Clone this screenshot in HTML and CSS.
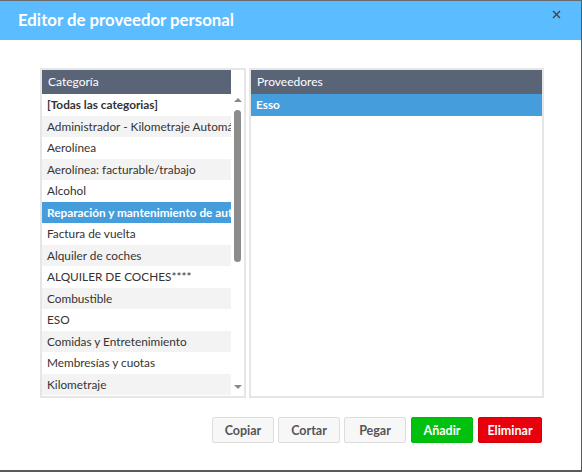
FILE: index.html
```html
<!DOCTYPE html>
<html lang="es">
<head>
  <meta charset="UTF-8">
  <title>Editor de proveedor personal</title>
  <link rel="stylesheet" href="styles.css">
</head>
<body>
  <div class="dialog">
    <!-- Titelleiste -->
    <div class="dialog-header">
      <span class="dialog-title">Editor de proveedor personal</span>
      <button class="close-btn" title="Cerrar">
        <svg width="9" height="9" viewBox="0 0 9 9"><path d="M1 1 L8 8 M8 1 L1 8" stroke="#444" stroke-width="1.4"/></svg>
      </button>
    </div>

    <div class="dialog-body">
      <!-- Kategorien links -->
      <div class="panel panel-left">
        <div class="list">
          <div class="list-head">Categoría</div>
          <div class="row bold">[Todas las categorias]</div>
          <div class="row">Administrador - Kilometraje Automático</div>
          <div class="row">Aerolínea</div>
          <div class="row">Aerolínea: facturable/trabajo</div>
          <div class="row">Alcohol</div>
          <div class="row selected">Reparación y mantenimiento de automóviles</div>
          <div class="row">Factura de vuelta</div>
          <div class="row">Alquiler de coches</div>
          <div class="row">ALQUILER DE COCHES****</div>
          <div class="row">Combustible</div>
          <div class="row">ESO</div>
          <div class="row">Comidas y Entretenimiento</div>
          <div class="row">Membresías y cuotas</div>
          <div class="row">Kilometraje</div>
        </div>
        <div class="scrollbar">
          <span class="arrow up"></span>
          <div class="track"><div class="thumb"></div></div>
          <span class="arrow down"></span>
        </div>
      </div>

      <!-- Anbieter rechts -->
      <div class="panel panel-right">
        <div class="list">
          <div class="list-head">Proveedores</div>
          <div class="row selected">Esso</div>
        </div>
      </div>
    </div>

    <div class="dialog-footer">
      <button class="btn">Copiar</button>
      <button class="btn">Cortar</button>
      <button class="btn">Pegar</button>
      <button class="btn btn-add">Añadir</button>
      <button class="btn btn-delete">Eliminar</button>
    </div>
  </div>
</body>
</html>
```

FILE: styles.css
```css
/* Grundlayout */
body {
  margin: 0;
  background-color: #ffffff;
  font-family: Lato, "Open Sans", sans-serif;
  color: #333333;
}
.dialog {
  width: 582px;
  height: 472px;
  box-sizing: border-box;
  border-top: 1px solid #6a6a6a;
  border-right: 1px solid #5a5a5a;
  border-bottom: 2px solid #5a5a5a;
  display: flex;
  flex-direction: column;
  background-color: #ffffff;
}
/* Titelleiste */
.dialog-header {
  height: 39px;
  background-color: #5bbcff;
  position: relative;
  display: flex;
  align-items: center;
  padding-left: 18px;
}
.dialog-title {
  color: #ffffff;
  font-size: 16.8px;
  font-weight: bold;
  margin-top: -2px;
}
.close-btn {
  position: absolute;
  right: 20px;
  top: 6px;
  border: none;
  background: transparent;
  padding: 0;
  cursor: pointer;
}
/* Inhalt mit zwei Listen */
.dialog-body {
  display: flex;
  gap: 3px;
  padding: 28px 0 0 40px;
  height: 330px;
}
.panel {
  border: 2px solid #e6e6e6;
  display: flex;
  background-color: #ffffff;
}
.panel-left {
  width: 202px;
}
.panel-right {
  width: 291px;
}
.list {
  flex: 1;
  overflow: hidden;
}
.list-head {
  height: 24px;
  line-height: 24px;
  background-color: #5a6477;
  color: #ffffff;
  font-size: 12px;
  padding-left: 6px;
}
.row {
  height: 21.5px;
  line-height: 21.5px;
  font-size: 11.8px;
  padding-left: 5px;
  white-space: nowrap;
  overflow: hidden;
}
.row:nth-child(odd) {
  background-color: #f3f3f3;
}
.row.bold {
  font-weight: bold;
}
.row.selected {
  background-color: #459ddb;
  color: #ffffff;
  font-weight: bold;
}
/* Bildlaufleiste */
.scrollbar {
  width: 13px;
  display: flex;
  flex-direction: column;
  align-items: center;
  padding-top: 28px;
  padding-bottom: 7px;
}
.arrow {
  width: 0;
  height: 0;
  border-left: 4px solid transparent;
  border-right: 4px solid transparent;
}
.arrow.up {
  border-bottom: 4px solid #8a8a8a;
}
.arrow.down {
  border-top: 4px solid #8a8a8a;
}
.track {
  flex: 1;
  width: 100%;
  display: flex;
  justify-content: center;
  padding-top: 8px;
}
.thumb {
  width: 7px;
  height: 152px;
  border-radius: 4px;
  background-color: #8c8c8c;
}
/* Schaltflächen unten */
.dialog-footer {
  display: flex;
  justify-content: flex-end;
  gap: 4px;
  padding: 19px 39px 0 0;
}
.btn {
  width: 62px;
  height: 26px;
  box-sizing: border-box;
  border: 1px solid #dddddd;
  border-radius: 2px;
  background-color: #f7f7f7;
  color: #555555;
  font-family: inherit;
  font-size: 12.5px;
  font-weight: bold;
  cursor: pointer;
}
.btn-add {
  background-color: #00c20e;
  border-color: #00b50c;
  color: #ffffff;
  margin-left: 1px;
}
.btn-delete {
  background-color: #e8000d;
  border-color: #d4000b;
  color: #ffffff;
  width: 64px;
  margin-left: 1px;
}
```
